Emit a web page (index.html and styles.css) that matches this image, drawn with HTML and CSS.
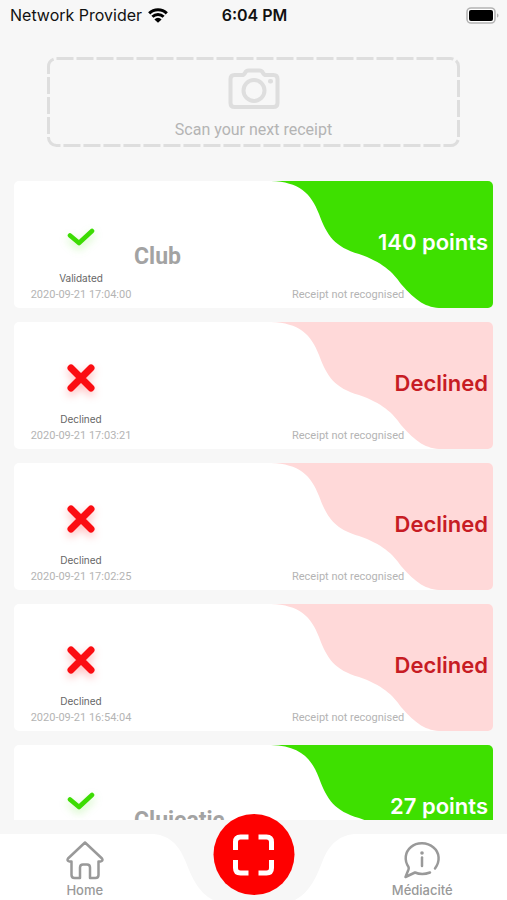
FILE: index.html
```
<!DOCTYPE html>
<html lang="en">
<head>
<meta charset="utf-8">
<meta name="viewport" content="width=device-width, initial-scale=1">
<title>Receipts</title>
<link rel="stylesheet" href="styles.css">
</head>
<body>
<svg class="defs" aria-hidden="true">
  <symbol id="wave" viewBox="0 0 222 127" preserveAspectRatio="none">
    <path d="M0 0C28 1 40 12 48 33C56 55 64 66 88 73C111 81 122 91 130 103C145 120 155 127 171 127H222V0Z"/>
  </symbol>
  <symbol id="check" viewBox="0 0 28 28">
    <path d="M3 12.500L12 20L25 8" fill="none" stroke="currentColor" stroke-width="4.600" stroke-linecap="round" stroke-linejoin="round"/>
  </symbol>
  <symbol id="cross" viewBox="0 0 28 28">
    <path d="M4 4L24 24M24 4L4 24" fill="none" stroke="currentColor" stroke-width="7" stroke-linecap="round"/>
  </symbol>
</svg>

<header class="statusbar">
  <div class="carrier">
    <span>Network Provider</span>
    <svg class="wifi" viewBox="0 0 20 15" aria-hidden="true">
      <path d="M1.200 5.400A12.500 12.500 0 0 1 18.800 5.400M4.400 8.800A8 8 0 0 1 15.600 8.800" fill="none" stroke="#000" stroke-width="3"/>
      <path d="M10 14.800L6.400 11.400A4.800 4.800 0 0 1 13.600 11.400Z"/>
    </svg>
  </div>
  <time class="clock">6:04 PM</time>
  <svg class="battery" viewBox="0 0 33 17" role="img" aria-label="Battery full">
    <rect x="1" y="1" width="28" height="15" rx="4" fill="#fff" stroke="#b4b4b4" stroke-width="1.600"/>
    <rect x="3" y="3" width="24" height="11" rx="2"/>
    <path d="M31 6.500C33 7 33 10 31 10.500Z" fill="#b4b4b4"/>
  </svg>
</header>

<main class="content">
  <button class="scan" type="button">
    <svg class="scan-border" aria-hidden="true"><rect class="scan-rect" x="1.500" y="1.500" rx="8"/></svg>
    <svg class="camera" viewBox="0 0 52 42" aria-hidden="true">
      <g fill="none" stroke="#dedede" stroke-width="4" stroke-linejoin="round">
        <path d="M2.500 11Q2.500 7 6.500 7H14Q16 7 17 5Q18 2.500 20.500 2.500H31.500Q34 2.500 35 5Q36 7 38 7H45.500Q49.500 7 49.500 11V35Q49.500 39 45.500 39H6.500Q2.500 39 2.500 35Z"/>
        <circle cx="26" cy="22.500" r="10.500"/>
      </g>
      <rect x="40" y="11" width="5" height="4.500" rx="2" fill="#dedede"/>
    </svg>
    <span>Scan your next receipt</span>
  </button>

  <ul class="receipts">
    <li class="card validated">
      <div class="state">
        <svg class="mark"><use href="#check"/></svg>
        <span class="label">Validated</span>
        <time class="small">2020-09-21 17:04:00</time>
      </div>
      <h2 class="shop">Club</h2>
      <div class="result">
        <svg class="wave"><use href="#wave"/></svg>
        <strong class="amount">140 points</strong>
        <span class="small note">Receipt not recognised</span>
      </div>
    </li>
    <li class="card declined">
      <div class="state">
        <svg class="mark"><use href="#cross"/></svg>
        <span class="label">Declined</span>
        <time class="small">2020-09-21 17:03:21</time>
      </div>
      <div class="result">
        <svg class="wave"><use href="#wave"/></svg>
        <strong class="amount">Declined</strong>
        <span class="small note">Receipt not recognised</span>
      </div>
    </li>
    <li class="card declined">
      <div class="state">
        <svg class="mark"><use href="#cross"/></svg>
        <span class="label">Declined</span>
        <time class="small">2020-09-21 17:02:25</time>
      </div>
      <div class="result">
        <svg class="wave"><use href="#wave"/></svg>
        <strong class="amount">Declined</strong>
        <span class="small note">Receipt not recognised</span>
      </div>
    </li>
    <li class="card declined">
      <div class="state">
        <svg class="mark"><use href="#cross"/></svg>
        <span class="label">Declined</span>
        <time class="small">2020-09-21 16:54:04</time>
      </div>
      <div class="result">
        <svg class="wave"><use href="#wave"/></svg>
        <strong class="amount">Declined</strong>
        <span class="small note">Receipt not recognised</span>
      </div>
    </li>
    <li class="card validated">
      <div class="state">
        <svg class="mark"><use href="#check"/></svg>
      </div>
      <h2 class="shop">Clujeatic</h2>
      <div class="result">
        <svg class="wave"><use href="#wave"/></svg>
        <strong class="amount">27 points</strong>
      </div>
    </li>
  </ul>
</main>

<nav class="tabs">
  <a class="tab" href="#home">
    <svg class="tab-icon" viewBox="0 0 40 40" aria-hidden="true">
      <path d="M20 2.500L3 18.500Q1.500 21 4.500 21.500H6.500V35Q6.500 38 9.500 38H15V27.500Q15 24.500 18 24.500H22Q25 24.500 25 27.500V38H30.500Q33.500 38 33.500 35V21.500H35.500Q38.500 21 37 18.500Z" fill="none" stroke="currentColor" stroke-width="2.500" stroke-linejoin="round"/>
    </svg>
    <span>Home</span>
  </a>
  <svg class="notch" viewBox="0 0 200 66" preserveAspectRatio="none" aria-hidden="true">
    <path d="M0 0C17 2 25 12 31 26C38 44 44 58 59 66H0ZM200 0C183 2 175 12 169 26C162 44 156 58 141 66H200Z" fill="#fff"/>
  </svg>
  <a class="tab tab-end" href="#mediacite">
    <svg class="tab-icon" viewBox="0 0 40 40" aria-hidden="true">
      <g fill="none" stroke="currentColor" stroke-width="2.500" stroke-linecap="round" stroke-linejoin="round">
        <path d="M33 28.500C38.500 21 37.500 12.500 31.500 7.500C25 2 15 2 9 7C3 12 2 20 6.500 27Q7 28 6.500 29.500L3.500 37L13 32.500Q20 35.500 28 32.500"/>
        <path d="M20 17.500V26"/>
      </g>
      <circle cx="20" cy="13" r="1.800" fill="currentColor"/>
    </svg>
    <span>Médiacité</span>
  </a>
  <button class="capture" type="button" aria-label="Scan receipt">
    <svg viewBox="0 0 42 42" aria-hidden="true">
      <path d="M3 16V8Q3 3 8 3H16M26 3H34Q39 3 39 8V16M39 26V34Q39 39 34 39H26M16 39H8Q3 39 3 34V26" fill="none" stroke="#fff" stroke-width="5"/>
    </svg>
  </button>
</nav>
</body>
</html>
```
FILE: styles.css
```
* {
  box-sizing: border-box;
}

body {
  margin: 0;
  height: 100vh;
  display: flex;
  flex-direction: column;
  overflow: hidden;
  background: #f7f7f7;
  color: #a8a8a8;
  font-family: Inter, "Liberation Sans", sans-serif;
}

.defs {
  display: none;
}

.statusbar {
  display: grid;
  grid-template-columns: 1fr auto 1fr;
  align-items: center;
  height: 30px;
  padding: 0 8px 0 10px;
  color: #111;
  font-size: 16px;
}

.carrier {
  display: flex;
  align-items: center;
  gap: 6px;
}

.wifi {
  width: 20px;
  height: 15px;
}

.clock {
  font-weight: 600;
}

.battery {
  width: 33px;
  height: 17px;
  justify-self: end;
}

.content {
  flex: 1;
  min-height: 0;
  overflow: hidden;
  padding: 27px 14px 0;
}

.scan {
  position: relative;
  display: flex;
  flex-direction: column;
  align-items: center;
  gap: 10px;
  width: calc(100% - 66px);
  height: 90px;
  margin: 0 33px;
  padding: 11px 0 0;
  border: 0;
  background: none;
  color: #b4b4b4;
  font: 16px/20px Roboto, sans-serif;
}

.scan-border {
  position: absolute;
  inset: 0;
  width: 100%;
  height: 100%;
}

.scan-rect {
  width: calc(100% - 3px);
  height: calc(100% - 3px);
  fill: none;
  stroke: #dedede;
  stroke-width: 3px;
  stroke-dasharray: 17 3;
}

.camera {
  width: 52px;
  height: 42px;
}

.receipts {
  display: flex;
  flex-direction: column;
  gap: 14px;
  margin: 34px 0 0;
  padding: 0;
  list-style: none;
}

.card {
  flex: none;
  display: grid;
  grid-template-columns: 120px 1fr 222px;
  height: 127px;
  border-radius: 5px;
  overflow: hidden;
  background: #fff;
}

.state {
  grid-column: 1;
  display: flex;
  flex-direction: column;
  align-items: center;
  padding: 42px 0 0 14px;
}

.mark {
  width: 28px;
  height: 28px;
}

.validated .mark {
  color: #3ddc04;
  filter: drop-shadow(0 4px 4px #3ee00044);
}

.declined .mark {
  color: #fb0d12;
  filter: drop-shadow(0 4px 4px #ff000044);
}

.label {
  margin-top: 20px;
  color: #666;
  font-size: 10px;
  line-height: 14px;
}

.small {
  font: 11px/16px Roboto, sans-serif;
  color: #b4b4b4;
  white-space: nowrap;
}

.state .small {
  margin-top: 2px;
}

.shop {
  grid-column: 2;
  margin: 60px 0 0;
  font: bold 23px/32px Roboto, sans-serif;
  color: #a3a3a3;
}

.result {
  grid-column: 3;
  display: grid;
  grid-template-rows: 106px 16px;
}

.wave {
  grid-area: 1 / 1 / 3 / 2;
  width: 100%;
  height: 127px;
}

.validated .wave {
  fill: #3ee000;
}

.declined .wave {
  fill: #ffd9d9;
}

.amount {
  grid-area: 1 / 1;
  justify-self: end;
  padding: 46px 5px 0 0;
  font-size: 22px;
  font-weight: 600;
  line-height: 30px;
}

.validated .amount {
  color: #fff;
}

.declined .amount {
  color: #c71c24;
}

.note {
  grid-area: 2 / 1;
  padding-left: 21px;
}

.tabs {
  position: relative;
  display: grid;
  grid-template-columns: 1fr 200px 1fr;
  height: 66px;
  margin-top: 14px;
}

.tab {
  display: flex;
  flex-direction: column;
  align-items: center;
  padding: 6px 0 0 16px;
  background: #fff;
  color: #999;
  font-size: 13px;
  font-weight: 500;
  line-height: 20px;
  text-decoration: none;
}

.tab-end {
  padding: 6px 16px 0 0;
}

.notch {
  width: 100%;
  height: 66px;
}

.tab-icon {
  width: 40px;
  height: 40px;
}

.capture {
  position: absolute;
  left: 50%;
  top: -20px;
  display: grid;
  place-items: center;
  width: 81px;
  height: 81px;
  padding: 0;
  border: 0;
  border-radius: 50%;
  background: #fe0000;
  transform: translateX(-50%);
}

.capture svg {
  width: 42px;
  height: 42px;
}
```
